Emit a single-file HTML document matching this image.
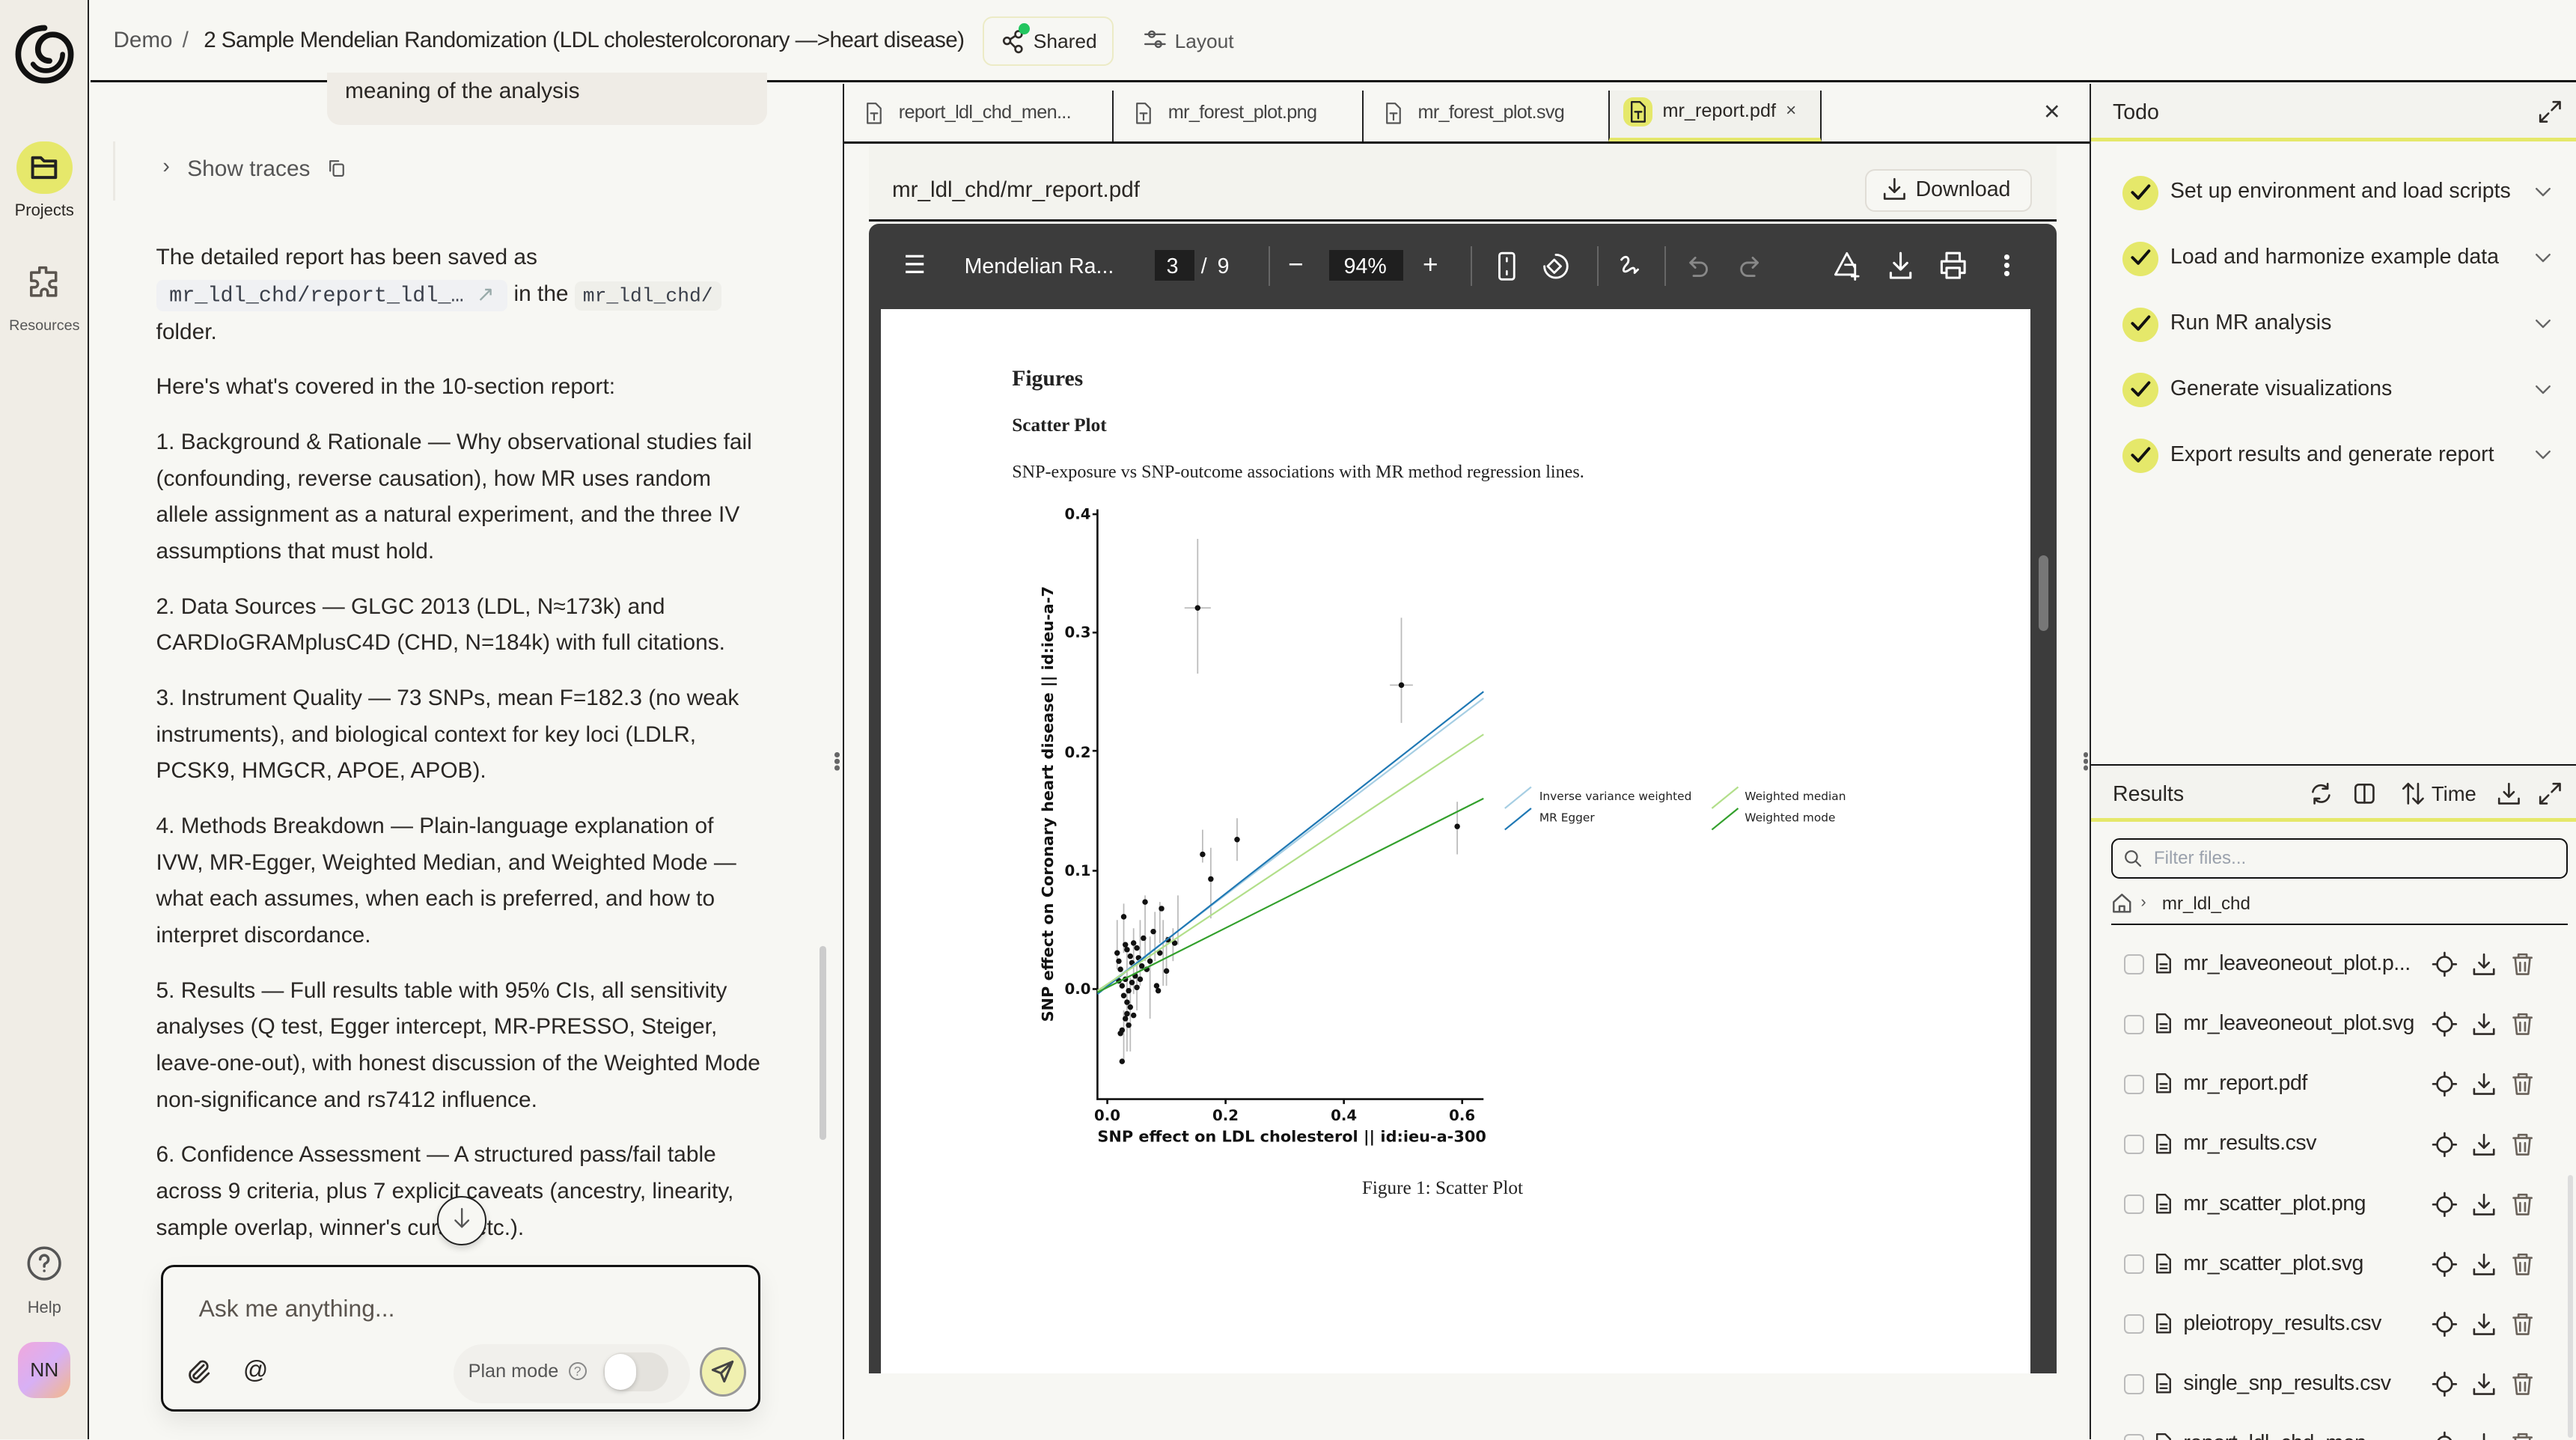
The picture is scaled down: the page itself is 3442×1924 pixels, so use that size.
<!DOCTYPE html>
<html><head><meta charset="utf-8">
<style>
*{box-sizing:border-box;margin:0;padding:0}
html,body{width:3442px;height:1924px;overflow:hidden;background:#f7f7f3}
#root{zoom:2.1952;width:1568px;height:876px;position:relative;font-family:"Liberation Sans",sans-serif;color:#2a2724;background:#f7f7f3}
.a{position:absolute}
.t{position:absolute;white-space:nowrap}
svg{overflow:visible}
.ic{fill:none;stroke:#2f2b28;stroke-width:1.6;stroke-linecap:round;stroke-linejoin:round}
.chat p{font-size:13.6px;line-height:22.3px;color:#2a2724;margin-bottom:11px}
.code{font-family:"Liberation Mono",monospace;font-size:12px;background:#efefea;padding:2px 5px;border-radius:4px;color:#3a3f4a}
</style></head><body><div id="root">

<!-- sidebar -->
<div class="a" style="left:0;top:0;width:54px;height:876px;background:#f0ede6;border-right:1px solid #222"></div>
<svg class="a" style="left:9px;top:15px" width="36" height="36" viewBox="0 0 36 36"><path d="M18 2C9 2 2 9 2 18s7 16 16 16 16-7 16-16c0-7-5-12-11-12-5 0-9 4-9 9 0 4 3 7 7 7" fill="none" stroke="#111" stroke-width="3.5" stroke-linecap="round"/><path d="M11 24c2 3 5 4 8 4 6 0 10-5 10-10" fill="none" stroke="#111" stroke-width="3" stroke-linecap="round"/></svg>
<div class="a" style="left:10px;top:86px;width:34px;height:32px;border-radius:16px;background:#e6e86b"></div>
<svg class="a" style="left:17px;top:92px" width="20" height="20" viewBox="0 0 20 20"><path class="ic" d="M3 16V4h5l2 2h7v10z M3 9h14" style="stroke-width:1.8;stroke:#222"/></svg>
<div class="t" style="left:0;width:54px;text-align:center;top:122px;font-size:10px">Projects</div>
<svg class="a" style="left:15px;top:160px" width="24" height="24" viewBox="0 0 24 24"><path class="ic" d="M9 3h4v3a2 2 0 1 0 0 0h6v5h-2a2 2 0 1 0 0 4h2v5h-5v-2a2 2 0 1 0-4 0v2H4v-5h2a2 2 0 1 0 0-4H4V6h5z" style="stroke:#5a544e"/></svg>
<div class="t" style="left:0;width:54px;text-align:center;top:193px;font-size:9px;color:#555">Resources</div>
<svg class="a" style="left:16px;top:758px" width="22" height="22" viewBox="0 0 22 22"><circle cx="11" cy="11" r="9.5" class="ic" style="stroke:#555"/><path class="ic" d="M8.5 8.5a2.5 2.5 0 1 1 3.5 2.3c-.7.3-1 .8-1 1.5v.5" style="stroke:#555"/><circle cx="11" cy="15.5" r=".8" fill="#555"/></svg>
<div class="t" style="left:0;width:54px;text-align:center;top:790px;font-size:10px;color:#555">Help</div>
<div class="a" style="left:11px;top:817px;width:32px;height:34px;border-radius:10px;background:linear-gradient(135deg,#f0a8dc,#d7b0f5 50%,#f4b888);font-size:12px;text-align:center;line-height:34px">NN</div>

<!-- top bar -->
<div class="a" style="left:55px;top:0;width:1513px;height:50px;border-bottom:1.5px solid #111;background:#f7f7f3"></div>
<div class="t" style="left:69px;top:17px;font-size:13.5px;color:#555">Demo</div>
<div class="t" style="left:111px;top:17px;font-size:13.5px;color:#666">/</div>
<div class="t" style="left:124px;top:17px;font-size:13.5px;letter-spacing:-0.25px">2 Sample Mendelian Randomization (LDL cholesterolcoronary —&gt;heart disease)</div>
<div class="a" style="left:598px;top:10px;width:80px;height:30px;border:1px solid #ecebc6;border-radius:6px"></div>
<svg class="a" style="left:610px;top:17px" width="14" height="16" viewBox="0 0 14 16"><circle cx="10" cy="4" r="2" class="ic" style="stroke-width:1.2"/><circle cx="3" cy="8" r="2" class="ic" style="stroke-width:1.2"/><circle cx="10" cy="13" r="2" class="ic" style="stroke-width:1.2"/><path class="ic" d="M5 7l3-2M5 9l3 3" style="stroke-width:1.2"/></svg>
<div class="a" style="left:620px;top:14px;width:7px;height:7px;border-radius:50%;background:#22c55e"></div>
<div class="t" style="left:629px;top:18px;font-size:12px">Shared</div>
<svg class="a" style="left:696px;top:17px" width="14" height="14" viewBox="0 0 14 14"><path class="ic" d="M1 4h12M1 10h12" style="stroke-width:1.1;stroke:#555"/><circle cx="5" cy="4" r="1.8" fill="#f7f7f3" class="ic" style="stroke-width:1.1;stroke:#555"/><circle cx="9" cy="10" r="1.8" fill="#f7f7f3" class="ic" style="stroke-width:1.1;stroke:#555"/></svg>
<div class="t" style="left:715px;top:18px;font-size:12px;color:#555">Layout</div>

<!-- chat -->
<div class="a" style="left:513px;top:51px;width:1px;height:825px;background:#222"></div>
<div class="a" style="left:199px;top:44px;width:268px;height:32px;background:#efece6;border-radius:0 0 8px 8px"></div>
<div class="t" style="left:210px;top:48px;font-size:13.6px">meaning of the analysis</div>
<div class="a" style="left:69px;top:86px;width:1px;height:36px;background:#ebe9e3"></div>
<div class="t" style="left:99px;top:94px;font-size:13px;color:#555">›</div>
<div class="t" style="left:114px;top:95px;font-size:13.6px;color:#555">Show traces</div>
<svg class="a" style="left:200px;top:97px" width="10" height="11" viewBox="0 0 10 11"><rect x="3" y="3" width="6" height="7" rx="1" class="ic" style="stroke-width:1;stroke:#555"/><path class="ic" d="M1 7V1h5" style="stroke-width:1;stroke:#555"/></svg>
<div class="a chat" style="left:95px;top:146px;width:370px">
<p style="margin-bottom:0">The detailed report has been saved as</p>
<p><span class="code" style="background:#f0f1f3;font-size:13px;padding:2px 8px">mr_ldl_chd/report_ldl_… <span style="color:#9aa">↗</span></span> in the <span class="code">mr_ldl_chd/</span><br>folder.</p>
<p>Here's what's covered in the 10-section report:</p>
<p>1. Background &amp; Rationale — Why observational studies fail (confounding, reverse causation), how MR uses random allele assignment as a natural experiment, and the three IV assumptions that must hold.</p>
<p>2. Data Sources — GLGC 2013 (LDL, N≈173k) and CARDIoGRAMplusC4D (CHD, N=184k) with full citations.</p>
<p>3. Instrument Quality — 73 SNPs, mean F=182.3 (no weak instruments), and biological context for key loci (LDLR, PCSK9, HMGCR, APOE, APOB).</p>
<p>4. Methods Breakdown — Plain-language explanation of IVW, MR-Egger, Weighted Median, and Weighted Mode — what each assumes, when each is preferred, and how to interpret discordance.</p>
<p>5. Results — Full results table with 95% CIs, all sensitivity analyses (Q test, Egger intercept, MR-PRESSO, Steiger, leave-one-out), with honest discussion of the Weighted Mode non-significance and rs7412 influence.</p>
<p>6. Confidence Assessment — A structured pass/fail table across 9 criteria, plus 7 explicit caveats (ancestry, linearity, sample overlap, winner's curse, etc.).</p>
</div>
<div class="a" style="left:499px;top:576px;width:4px;height:118px;background:#ccc;border-radius:2px"></div>
<div class="a" style="left:266px;top:728px;width:30px;height:30px;border-radius:50%;border:1px solid #222;background:#f7f7f3;box-shadow:0 2px 4px rgba(0,0,0,.15)"></div>
<svg class="a" style="left:275px;top:735px" width="12" height="14" viewBox="0 0 12 14"><path class="ic" d="M6 1v11M2 8l4 4 4-4" style="stroke-width:1.1;stroke:#555"/></svg>
<div class="a" style="left:98px;top:770px;width:365px;height:89px;border:1.5px solid #111;border-radius:8px;background:#f7f7f3;box-shadow:0 6px 14px rgba(0,0,0,.08)"></div>
<div class="t" style="left:121px;top:788px;font-size:14.5px;color:#5a544e">Ask me anything...</div>
<svg class="a" style="left:113px;top:826px" width="16" height="17" viewBox="0 0 16 17"><path class="ic" d="M11 5l-6 6a1.5 1.5 0 0 0 2 2l6-6a3 3 0 0 0-4-4l-6 6a4.5 4.5 0 0 0 6 6l5-5" style="stroke-width:1.3"/></svg>
<div class="t" style="left:148px;top:825px;font-size:15px">@</div>
<div class="a" style="left:276px;top:818px;width:144px;height:36px;border-radius:18px;background:#f1f0ec"></div>
<div class="t" style="left:285px;top:828px;font-size:11.5px;color:#555">Plan mode</div>
<div class="a" style="left:346px;top:829px;width:11px;height:11px;border-radius:50%;border:1px solid #888;font-size:8px;text-align:center;line-height:10px;color:#888">?</div>
<div class="a" style="left:367px;top:823px;width:40px;height:24px;border-radius:12px;background:#e4e2dd"></div>
<div class="a" style="left:368px;top:824px;width:19px;height:22px;border-radius:11px;background:#fff;box-shadow:0 1px 3px rgba(0,0,0,.2)"></div>
<div class="a" style="left:426px;top:820px;width:28px;height:30px;border-radius:50%;background:#f0f0b0;border:1.5px solid #999"></div>
<svg class="a" style="left:432px;top:827px" width="16" height="16" viewBox="0 0 16 16"><path class="ic" d="M14 2L2 7l5 2 2 5zM7 9l7-7" style="stroke-width:1.4;stroke:#444"/></svg>

<!-- center -->
<div class="a" style="left:514px;top:86px;width:759px;height:1.5px;background:#111"></div>
<div class="a" style="left:1272px;top:51px;width:1px;height:825px;background:#222"></div>
<div class="a" style="left:677px;top:55px;width:1px;height:31px;background:#222"></div>
<div class="a" style="left:829px;top:55px;width:1px;height:31px;background:#222"></div>
<div class="a" style="left:979px;top:55px;width:130px;height:31px;background:#f1f1ec;border-left:1px solid #222;border-right:1px solid #222;border-bottom:2.5px solid #e5e86a"></div>
<svg class="a" style="left:527px;top:62px" width="10" height="14" viewBox="0 0 10 14"><path class="ic" d="M1 1h5l3 3v9H1z M3 7h4M5 7v4" style="stroke-width:1;stroke:#555"/></svg>
<div class="t" style="left:547px;top:62px;font-size:11.5px;color:#444;letter-spacing:-0.3px">report_ldl_chd_men...</div>
<svg class="a" style="left:691px;top:62px" width="10" height="14" viewBox="0 0 10 14"><path class="ic" d="M1 1h5l3 3v9H1z M3 7h4M5 7v4" style="stroke-width:1;stroke:#555"/></svg>
<div class="t" style="left:711px;top:62px;font-size:11.5px;color:#444;letter-spacing:-0.3px">mr_forest_plot.png</div>
<svg class="a" style="left:843px;top:62px" width="10" height="14" viewBox="0 0 10 14"><path class="ic" d="M1 1h5l3 3v9H1z M3 7h4M5 7v4" style="stroke-width:1;stroke:#555"/></svg>
<div class="t" style="left:863px;top:62px;font-size:11.5px;color:#444;letter-spacing:-0.3px">mr_forest_plot.svg</div>
<div class="a" style="left:988px;top:59px;width:18px;height:18px;border-radius:6px;background:#e5e86a"></div>
<svg class="a" style="left:992px;top:61px" width="10" height="14" viewBox="0 0 10 14"><path class="ic" d="M1 1h5l3 3v9H1z M3 7h4M5 7v4" style="stroke-width:1.1;stroke:#222"/></svg>
<div class="t" style="left:1012px;top:61px;font-size:11.5px">mr_report.pdf</div>
<div class="t" style="left:1087px;top:61px;font-size:11px;color:#444">×</div>
<div class="t" style="left:1244px;top:58px;font-size:17px;color:#333">×</div>

<div class="a" style="left:529px;top:89px;width:723px;height:46px;background:#f3f3ee;border-bottom:1.5px solid #111"></div>
<div class="t" style="left:543px;top:108px;font-size:13.5px">mr_ldl_chd/mr_report.pdf</div>
<div class="a" style="left:1135px;top:103px;width:102px;height:26px;border:1px solid #e0ddd6;border-radius:6px;background:#f7f7f3"></div>
<svg class="a" style="left:1146px;top:108px" width="14" height="14" viewBox="0 0 14 14"><path class="ic" d="M7 1v8M4 6l3 3 3-3M1 10v3h12v-3" style="stroke-width:1.2"/></svg>
<div class="t" style="left:1166px;top:108px;font-size:13px">Download</div>

<div class="a" style="left:529px;top:136px;width:723px;height:700px;background:#3c3c3c;border-radius:6px 6px 0 0"></div>
<div class="t" style="left:550px;top:152px;font-size:15px;color:#fff">☰</div>
<div class="t" style="left:587px;top:155px;font-size:13px;color:#fff">Mendelian Ra...</div>
<div class="a" style="left:703px;top:152px;width:24px;height:19px;background:#1f1f1f"></div>
<div class="t" style="left:710px;top:155px;font-size:13px;color:#fff">3</div>
<div class="t" style="left:731px;top:155px;font-size:13px;color:#fff">/</div>
<div class="t" style="left:741px;top:155px;font-size:13px;color:#fff">9</div>
<div class="a" style="left:772px;top:150px;width:1px;height:24px;background:#666"></div>
<div class="t" style="left:784px;top:152px;font-size:16px;color:#fff">−</div>
<div class="a" style="left:809px;top:152px;width:45px;height:19px;background:#1f1f1f"></div>
<div class="t" style="left:818px;top:155px;font-size:13px;color:#fff">94%</div>
<div class="t" style="left:866px;top:152px;font-size:16px;color:#fff">+</div>
<div class="a" style="left:895px;top:150px;width:1px;height:24px;background:#666"></div>
<svg class="a" style="left:910px;top:153px" width="14" height="18" viewBox="0 0 14 18"><rect x="2.5" y="1" width="9" height="16" rx="1.5" class="ic" style="stroke:#fff;stroke-width:1.3"/><path d="M7 4v2M7 12v2" class="ic" style="stroke:#fff;stroke-width:1.2"/></svg>
<svg class="a" style="left:937px;top:153px" width="18" height="18" viewBox="0 0 18 18"><path class="ic" d="M10 2a7 7 0 1 1-7 7M9 5l-4 4 4 4 4-4z" style="stroke:#fff;stroke-width:1.3"/></svg>
<div class="a" style="left:972px;top:150px;width:1px;height:24px;background:#666"></div>
<svg class="a" style="left:984px;top:153px" width="16" height="18" viewBox="0 0 16 18"><path class="ic" d="M3 5c3-4 6 0 3 3s-2 6 2 3 3 2 3 2l2-2" style="stroke:#fff;stroke-width:1.3"/></svg>
<div class="a" style="left:1013px;top:150px;width:1px;height:24px;background:#666"></div>
<svg class="a" style="left:1026px;top:155px" width="48" height="16" viewBox="0 0 48 16"><path class="ic" d="M3 5h6a4 4 0 0 1 0 8H5M3 5l3-3M3 5l3 3M44 5h-6a4 4 0 0 0 0 8h4M44 5l-3-3M44 5l-3 3" style="stroke:#888;stroke-width:1.3"/></svg>
<svg class="a" style="left:1115px;top:152px" width="18" height="19" viewBox="0 0 18 19"><path class="ic" d="M9 2L2 15h11M9 2l5 9M8 9h6v6M14 14v4M12 16h4" style="stroke:#fff;stroke-width:1.3"/></svg>
<svg class="a" style="left:1149px;top:153px" width="16" height="17" viewBox="0 0 16 17"><path class="ic" d="M8 1v10M4 7l4 4 4-4M2 13v3h12v-3" style="stroke:#fff;stroke-width:1.4"/></svg>
<svg class="a" style="left:1180px;top:153px" width="18" height="17" viewBox="0 0 18 17"><path class="ic" d="M5 6V1h8v5M2 6h14v7h-3M5 13H2V6M5 10h8v6H5z" style="stroke:#fff;stroke-width:1.4"/></svg>
<div class="a" style="left:1220px;top:155px;width:3px;height:3px;border-radius:50%;background:#fff;box-shadow:0 5px 0 #fff,0 10px 0 #fff"></div>
<div class="a" style="left:536px;top:188px;width:700px;height:648px;background:#fff"></div>
<div class="a" style="left:1241px;top:338px;width:6px;height:46px;border-radius:3px;background:#777"></div>
<div class="a" style="left:514px;top:836px;width:758px;height:40px;background:#f7f7f3"></div>

<!-- pdf content -->
<div class="t" style="left:616px;top:223px;font-family:'Liberation Serif',serif;font-size:13.5px;font-weight:bold;color:#222">Figures</div>
<div class="t" style="left:616px;top:253px;font-family:'Liberation Serif',serif;font-size:11.5px;font-weight:bold;color:#222">Scatter Plot</div>
<div class="t" style="left:616px;top:281px;font-family:'Liberation Serif',serif;font-size:11px;color:#222">SNP-exposure vs SNP-outcome associations with MR method regression lines.</div>
<div class="t" style="left:829px;top:717px;font-family:'Liberation Serif',serif;font-size:11.5px;color:#222">Figure 1: Scatter Plot</div>
<svg class="a" style="left:0;top:0" width="1568" height="876" viewBox="0 0 1568 876">
<g font-family="DejaVu Sans, sans-serif" font-weight="bold" font-size="9" fill="#111">
<text x="648" y="316">0.4</text><text x="648" y="388">0.3</text><text x="648" y="461">0.2</text><text x="648" y="533">0.1</text><text x="648" y="605">0.0</text>
<text x="666" y="682">0.0</text><text x="738" y="682">0.2</text><text x="810" y="682">0.4</text><text x="882" y="682">0.6</text>
<text x="668" y="695" font-size="9.5">SNP effect on LDL cholesterol || id:ieu-a-300</text>
<text transform="translate(641,622) rotate(-90)" font-size="9.5">SNP effect on Coronary heart disease || id:ieu-a-7</text>
</g>
<g stroke="#111" stroke-width="1.2" fill="none"><path d="M668 310V669H903"/><path d="M665 313h3M665 385h3M665 457h3M665 530h3M665 602h3M674 669v3M746 669v3M818 669v3M890 669v3" /></g>
<g stroke="#bbb" stroke-width="0.8" fill="none">
<path d="M729 328v82M721 370h16M853 376v64M846 417h14M887 488v32M753 498v26M732 505v20M737 516v43M680 560v30M684 550v30M686 580v60M690 565v40M694 560v40M697 545v40M700 570v50M703 555v30M706 549v25M708 560v40M710 570v30M714 565v20M717 545v30M688 595v45M684 615v30M692 585v30"/>
</g>
<g fill="#111">
<circle cx="729" cy="370" r="1.7"/><circle cx="853" cy="417" r="1.7"/><circle cx="887" cy="503" r="1.7"/><circle cx="753" cy="511" r="1.7"/><circle cx="732" cy="520" r="1.7"/><circle cx="737" cy="535" r="1.7"/>
<circle cx="684" cy="558" r="1.7"/><circle cx="697" cy="549" r="1.7"/><circle cx="707" cy="553" r="1.7"/><circle cx="702" cy="567" r="1.7"/><circle cx="711" cy="572" r="1.7"/><circle cx="715" cy="574" r="1.7"/><circle cx="706" cy="580" r="1.7"/><circle cx="710" cy="591" r="1.7"/>
<circle cx="680" cy="580" r="1.7"/><circle cx="681" cy="585" r="1.7"/><circle cx="682" cy="590" r="1.7"/><circle cx="685" cy="575" r="1.7"/><circle cx="686" cy="578" r="1.7"/><circle cx="688" cy="582" r="1.7"/><circle cx="689" cy="586" r="1.7"/><circle cx="690" cy="574" r="1.7"/><circle cx="692" cy="577" r="1.7"/><circle cx="693" cy="583" r="1.7"/><circle cx="695" cy="588" r="1.7"/><circle cx="696" cy="571" r="1.7"/><circle cx="698" cy="590" r="1.7"/><circle cx="700" cy="585" r="1.7"/>
<circle cx="681" cy="597" r="1.7"/><circle cx="683" cy="600" r="1.7"/><circle cx="685" cy="596" r="1.7"/><circle cx="687" cy="603" r="1.7"/><circle cx="689" cy="598" r="1.7"/><circle cx="691" cy="594" r="1.7"/><circle cx="692" cy="601" r="1.7"/><circle cx="694" cy="596" r="1.7"/><circle cx="684" cy="606" r="1.7"/><circle cx="686" cy="610" r="1.7"/><circle cx="688" cy="613" r="1.7"/><circle cx="690" cy="618" r="1.7"/><circle cx="685" cy="620" r="1.7"/><circle cx="687" cy="624" r="1.7"/><circle cx="683" cy="627" r="1.7"/><circle cx="682" cy="629" r="1.7"/><circle cx="686" cy="617" r="1.7"/><circle cx="683" cy="646" r="1.7"/><circle cx="704" cy="600" r="1.7"/><circle cx="705" cy="603" r="1.7"/>
</g>
<g stroke-width="1" fill="none"><path d="M668 604L903 425" stroke="#a6cee3"/><path d="M668 605L903 421" stroke="#1f78b4"/><path d="M668 603L903 447" stroke="#b2df8a"/><path d="M668 604L903 486" stroke="#33a02c"/>
<path d="M916 492L932 479" stroke="#a6cee3"/><path d="M916 505L932 492" stroke="#1f78b4"/><path d="M1042 492L1058 479" stroke="#b2df8a"/><path d="M1042 505L1058 492" stroke="#33a02c"/></g>
<g font-family="DejaVu Sans, sans-serif" font-size="7" fill="#222"><text x="937" y="487">Inverse variance weighted</text><text x="937" y="500">MR Egger</text><text x="1062" y="487">Weighted median</text><text x="1062" y="500">Weighted mode</text></g>
</svg>

<!-- right panel -->
<div class="a" style="left:1273px;top:51px;width:295px;height:35px;background:#f3f3ef;border-bottom:2.5px solid #e5e86a"></div>
<div class="t" style="left:1286px;top:61px;font-size:13px">Todo</div>
<svg class="a" style="left:1545px;top:61px" width="14" height="14" viewBox="0 0 14 14"><path class="ic" d="M8 6l5-5M9 1h4v4M6 8l-5 5M1 9v4h4" style="stroke-width:1.2"/></svg>
<div id="todos"></div>
<div class="a" style="left:1273px;top:465px;width:295px;height:35px;background:#f3f3ef;border-top:1px solid #111;border-bottom:2.5px solid #e5e86a"></div>
<div class="a" style="left:1268px;top:458px;width:3px;height:3px;border-radius:50%;background:#666;box-shadow:0 4px 0 #666,0 8px 0 #666"></div>
<div class="a" style="left:508px;top:458px;width:3px;height:3px;border-radius:50%;background:#666;box-shadow:0 4px 0 #666,0 8px 0 #666"></div>
<div class="t" style="left:1286px;top:476px;font-size:13px">Results</div>
<svg class="a" style="left:1406px;top:476px" width="14" height="14" viewBox="0 0 14 14"><path class="ic" d="M2 6a5 5 0 0 1 9-2M12 8a5 5 0 0 1-9 2M11 1v3H8M3 13v-3h3" style="stroke-width:1.2"/></svg>
<svg class="a" style="left:1432px;top:476px" width="14" height="14" viewBox="0 0 14 14"><rect x="1.5" y="1.5" width="11" height="11" rx="2" class="ic" style="stroke-width:1.2"/><path class="ic" d="M7 1.5v11" style="stroke-width:1.2"/></svg>
<svg class="a" style="left:1462px;top:476px" width="14" height="14" viewBox="0 0 14 14"><path class="ic" d="M4 13V1M1 4l3-3 3 3M10 1v12M7 10l3 3 3-3" style="stroke-width:1.2"/></svg>
<div class="t" style="left:1480px;top:476px;font-size:12.5px">Time</div>
<svg class="a" style="left:1520px;top:476px" width="14" height="14" viewBox="0 0 14 14"><path class="ic" d="M7 1v8M4 6l3 3 3-3M1 10v3h12v-3" style="stroke-width:1.2"/></svg>
<svg class="a" style="left:1545px;top:476px" width="14" height="14" viewBox="0 0 14 14"><path class="ic" d="M8 6l5-5M9 1h4v4M6 8l-5 5M1 9v4h4" style="stroke-width:1.2"/></svg>
<div class="a" style="left:1285px;top:510px;width:278px;height:25px;border:1.2px solid #111;border-radius:5px"></div>
<svg class="a" style="left:1293px;top:517px" width="11" height="11" viewBox="0 0 11 11"><circle cx="4.5" cy="4.5" r="3.5" class="ic" style="stroke-width:1;stroke:#555"/><path class="ic" d="M7 7l3 3" style="stroke-width:1;stroke:#555"/></svg>
<div class="t" style="left:1311px;top:516px;font-size:11px;color:#9aa1ac">Filter files...</div>
<svg class="a" style="left:1285px;top:543px" width="13" height="13" viewBox="0 0 13 13"><path class="ic" d="M1.5 6L6.5 1.5 11.5 6v6h-10zM5 12V8.5h3V12" style="stroke-width:1.1;stroke:#555"/></svg>
<div class="t" style="left:1303px;top:543px;font-size:10px;color:#555">›</div>
<div class="t" style="left:1316px;top:544px;font-size:11px">mr_ldl_chd</div>
<div class="a" style="left:1285px;top:562px;width:278px;height:1px;background:#111"></div>
<div id="files"></div>
<div class="a" style="left:1563px;top:715px;width:3px;height:160px;background:#ddd;border-radius:2px"></div>
</div>
<script>
var T=["Set up environment and load scripts","Load and harmonize example data","Run MR analysis","Generate visualizations","Export results and generate report"],h="";
T.forEach(function(s,i){var y=117+i*40;h+='<div class="a" style="left:1292px;top:'+(y-10)+'px;width:22px;height:21px;border-radius:50%;background:#e5e86a"></div><svg class="a" style="left:1296px;top:'+(y-6)+'px" width="14" height="12" viewBox="0 0 14 12"><path class="ic" d="M2 6l3.5 3.5L12 2" style="stroke:#111;stroke-width:1.8"/></svg><div class="t" style="left:1321px;top:'+(y-8)+'px;font-size:13px">'+s+'</div><svg class="a" style="left:1543px;top:'+(y-3)+'px" width="10" height="6" viewBox="0 0 10 6"><path class="ic" d="M1 1l4 4 4-4" style="stroke:#666;stroke-width:1.1"/></svg>';});
document.getElementById("todos").outerHTML=h;
var F=["mr_leaveoneout_plot.p...","mr_leaveoneout_plot.svg","mr_report.pdf","mr_results.csv","mr_scatter_plot.png","mr_scatter_plot.svg","pleiotropy_results.csv","single_snp_results.csv","report_ldl_chd_men..."];h="";
F.forEach(function(s,i){var y=587+i*36.5;h+='<div class="a" style="left:1293px;top:'+(y-6)+'px;width:12px;height:12px;border:1px solid #bbb;border-radius:3px"></div><svg class="a" style="left:1312px;top:'+(y-7)+'px" width="10" height="13" viewBox="0 0 10 13"><path class="ic" d="M1 1h5l3 3v8H1zM3 7h4M3 9.5h4" style="stroke-width:1.1"/></svg><div class="t" style="left:1329px;top:'+(y-8)+'px;font-size:13px;letter-spacing:-0.2px">'+s+'</div><svg class="a" style="left:1481px;top:'+(y-7)+'px" width="62" height="14" viewBox="0 0 62 14"><circle cx="7" cy="7" r="4.5" class="ic" style="stroke-width:1.2"/><path class="ic" d="M7 0v2.5M7 11.5V14M0 7h2.5M11.5 7H14M31 1v8M28 6l3 3 3-3M25 10v3h12v-3" style="stroke-width:1.2"/><path class="ic" d="M49 3h11M52 3V1h5v2M50 3l1 10h7l1-10M53 6v5M56 6v5" style="stroke:#6a625a;stroke-width:1.2"/></svg>';});
document.getElementById("files").outerHTML=h;
</script>
</body></html>
